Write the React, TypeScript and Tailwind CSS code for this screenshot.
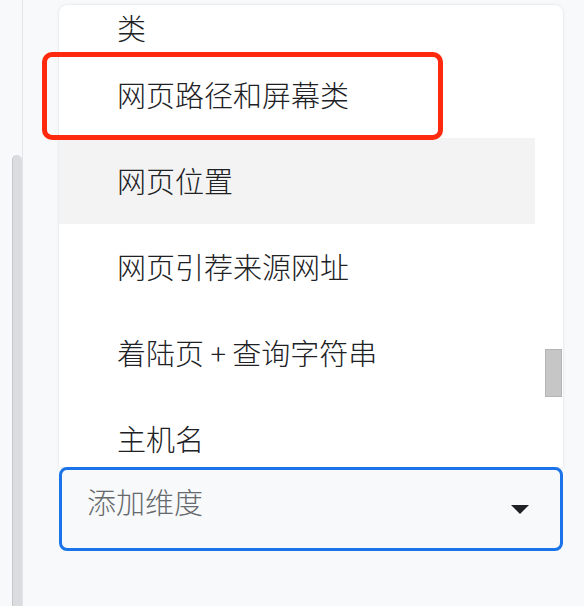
const items = ['网页路径和屏幕类', '网页位置', '网页引荐来源网址', '着陆页 + 查询字符串', '主机名'];

function App() {
  return (
    <div
      className="flex h-[606px] w-[584px] overflow-hidden bg-[#f8f9fa]"
      style={{ fontFamily: '"Noto Sans CJK SC", "Noto Sans", sans-serif' }}
    >
      {/* left rail */}
      <div className="w-3 shrink-0" />
      <div className="flex w-[11px] shrink-0 flex-col border-r border-[#e3e4e6]">
        <div className="mt-[155px] flex-1 rounded-t-[5px] border-l border-[#c6c7c9] bg-[#dadce0]" />
      </div>

      <div className="relative ml-[36px] flex w-[504px] shrink-0 flex-col pt-[5px]">
        {/* dropdown list */}
        <div className="flex h-[462px] overflow-hidden rounded-t-lg bg-white shadow-[0_0_3px_rgba(0,0,0,0.12)]">
          <div className="w-[476px] shrink-0 text-[29px] font-light leading-[40px] text-[#202124]">
            <div className="flex h-[47px] items-center pb-[4px] pl-[58px]">类</div>
            {items.map((label, i) => (
              <div
                key={label}
                className={
                  i === 1
                    ? 'flex h-[86px] items-center bg-[#f3f3f3] pb-[3px] pl-[58px]'
                    : 'flex h-[86px] items-center pb-[3px] pl-[58px]'
                }
              >
                {label}
              </div>
            ))}
          </div>
          <div className="flex-1">
            <div className="ml-[10px] mt-[344px] h-[48px] w-[17px] border border-[#b4b4b4] bg-[#c6c6c6]" />
          </div>
        </div>

        {/* select */}
        <div className="flex h-[84px] items-center justify-between rounded-lg border-[3px] border-[#1a73e8] bg-[#f8f9fa] pl-[25px] pr-[31px]">
          <span className="-mt-[14px] text-[29px] font-light text-[#66696d]">添加维度</span>
          <svg width="18" height="9" viewBox="0 0 18 9">
            <path d="M0 0h18L9 9z" fill="#202124" />
          </svg>
        </div>

        {/* highlight box */}
        <div className="absolute left-[-17px] top-[52px] h-[88px] w-[401px] rounded-[10px] border-[5px] border-[#ff2a0d]" />
      </div>
    </div>
  );
}

export default App;
